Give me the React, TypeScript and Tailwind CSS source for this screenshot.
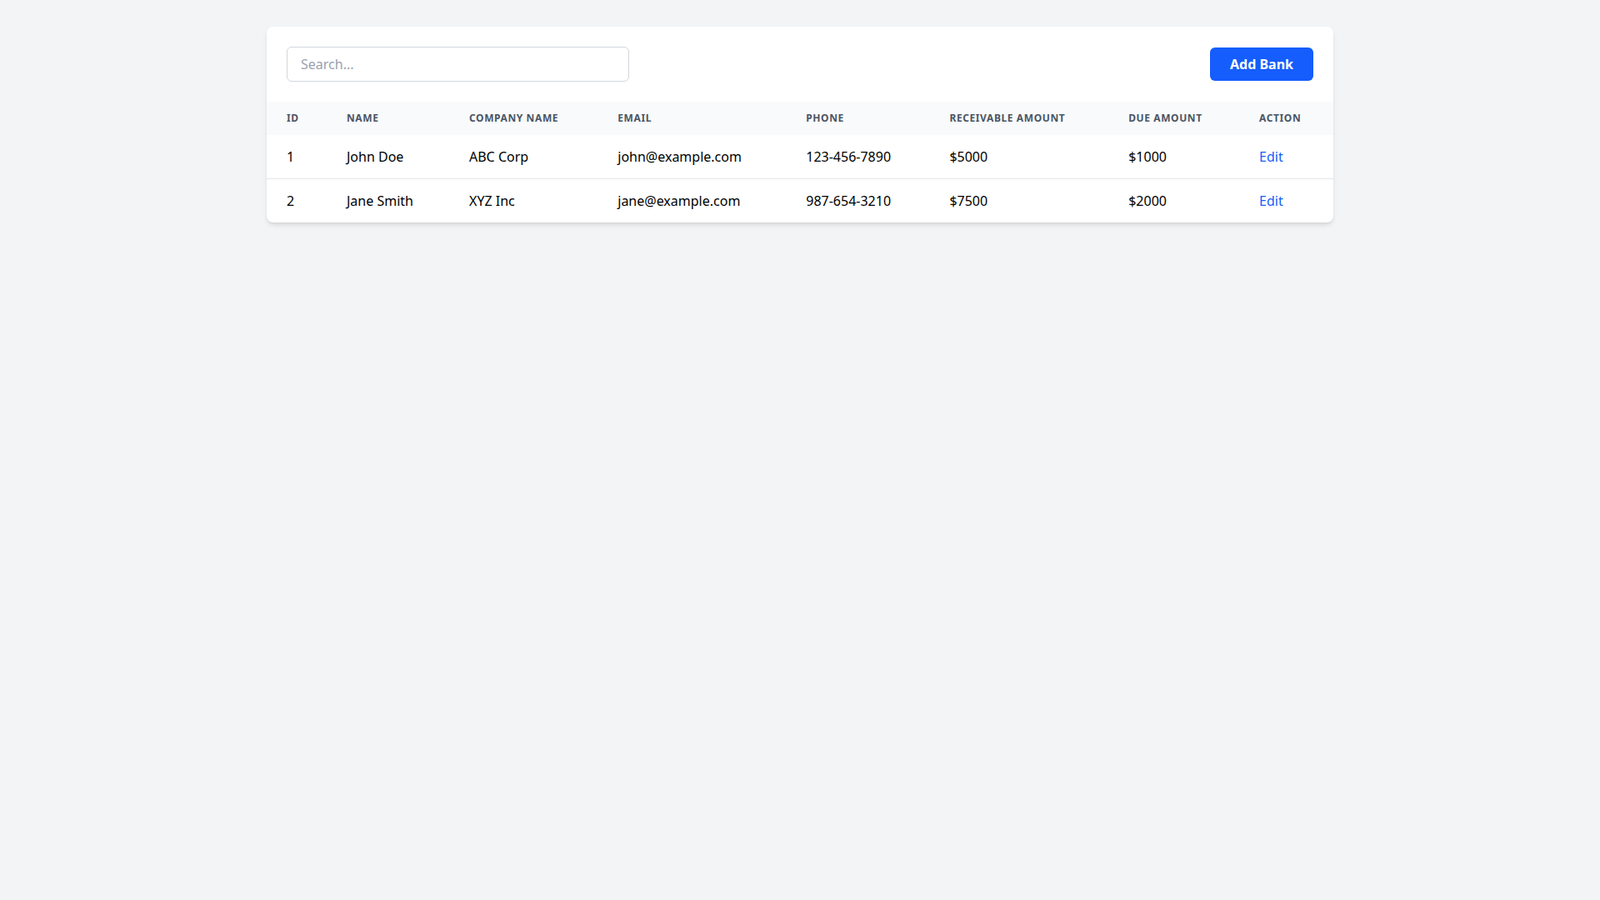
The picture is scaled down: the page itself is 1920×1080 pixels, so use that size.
const rows = [
  { id: 1, name: 'John Doe', company: 'ABC Corp', email: 'john@example.com', phone: '123-456-7890', receivable: '$5000', due: '$1000' },
  { id: 2, name: 'Jane Smith', company: 'XYZ Inc', email: 'jane@example.com', phone: '987-654-3210', receivable: '$7500', due: '$2000' },
]

const headers = ['ID', 'Name', 'Company Name', 'Email', 'Phone', 'Receivable Amount', 'Due Amount', 'Action']

export default function App() {
  return (
    <div className="min-h-screen bg-gray-100 pt-8 font-['DejaVu_Sans',sans-serif]">
      <div className="mx-auto max-w-7xl overflow-hidden rounded-lg bg-white shadow-md">
        <div className="flex items-center justify-between p-6">
          <input
            type="text"
            placeholder="Search..."
            className="h-[42px] w-1/3 rounded-md border border-gray-300 px-4 text-base placeholder-gray-400"
          />
          <button className="h-10 rounded-md bg-blue-600 px-6 text-base font-bold text-white">Add Bank</button>
        </div>
        <table className="w-full text-left">
          <thead className="bg-gray-50">
            <tr>
              {headers.map((h) => (
                <th key={h} className="px-6 py-3 text-xs font-bold uppercase tracking-wider text-gray-600">
                  {h}
                </th>
              ))}
            </tr>
          </thead>
          <tbody className="divide-y divide-gray-200">
            {rows.map((r) => (
              <tr key={r.id} className="text-base text-black">
                <td className="px-6 py-[14px]">{r.id}</td>
                <td className="px-6 py-[14px]">{r.name}</td>
                <td className="px-6 py-[14px]">{r.company}</td>
                <td className="px-6 py-[14px]">{r.email}</td>
                <td className="px-6 py-[14px]">{r.phone}</td>
                <td className="px-6 py-[14px]">{r.receivable}</td>
                <td className="px-6 py-[14px]">{r.due}</td>
                <td className="px-6 py-[14px] text-blue-600">Edit</td>
              </tr>
            ))}
          </tbody>
        </table>
      </div>
    </div>
  )
}
